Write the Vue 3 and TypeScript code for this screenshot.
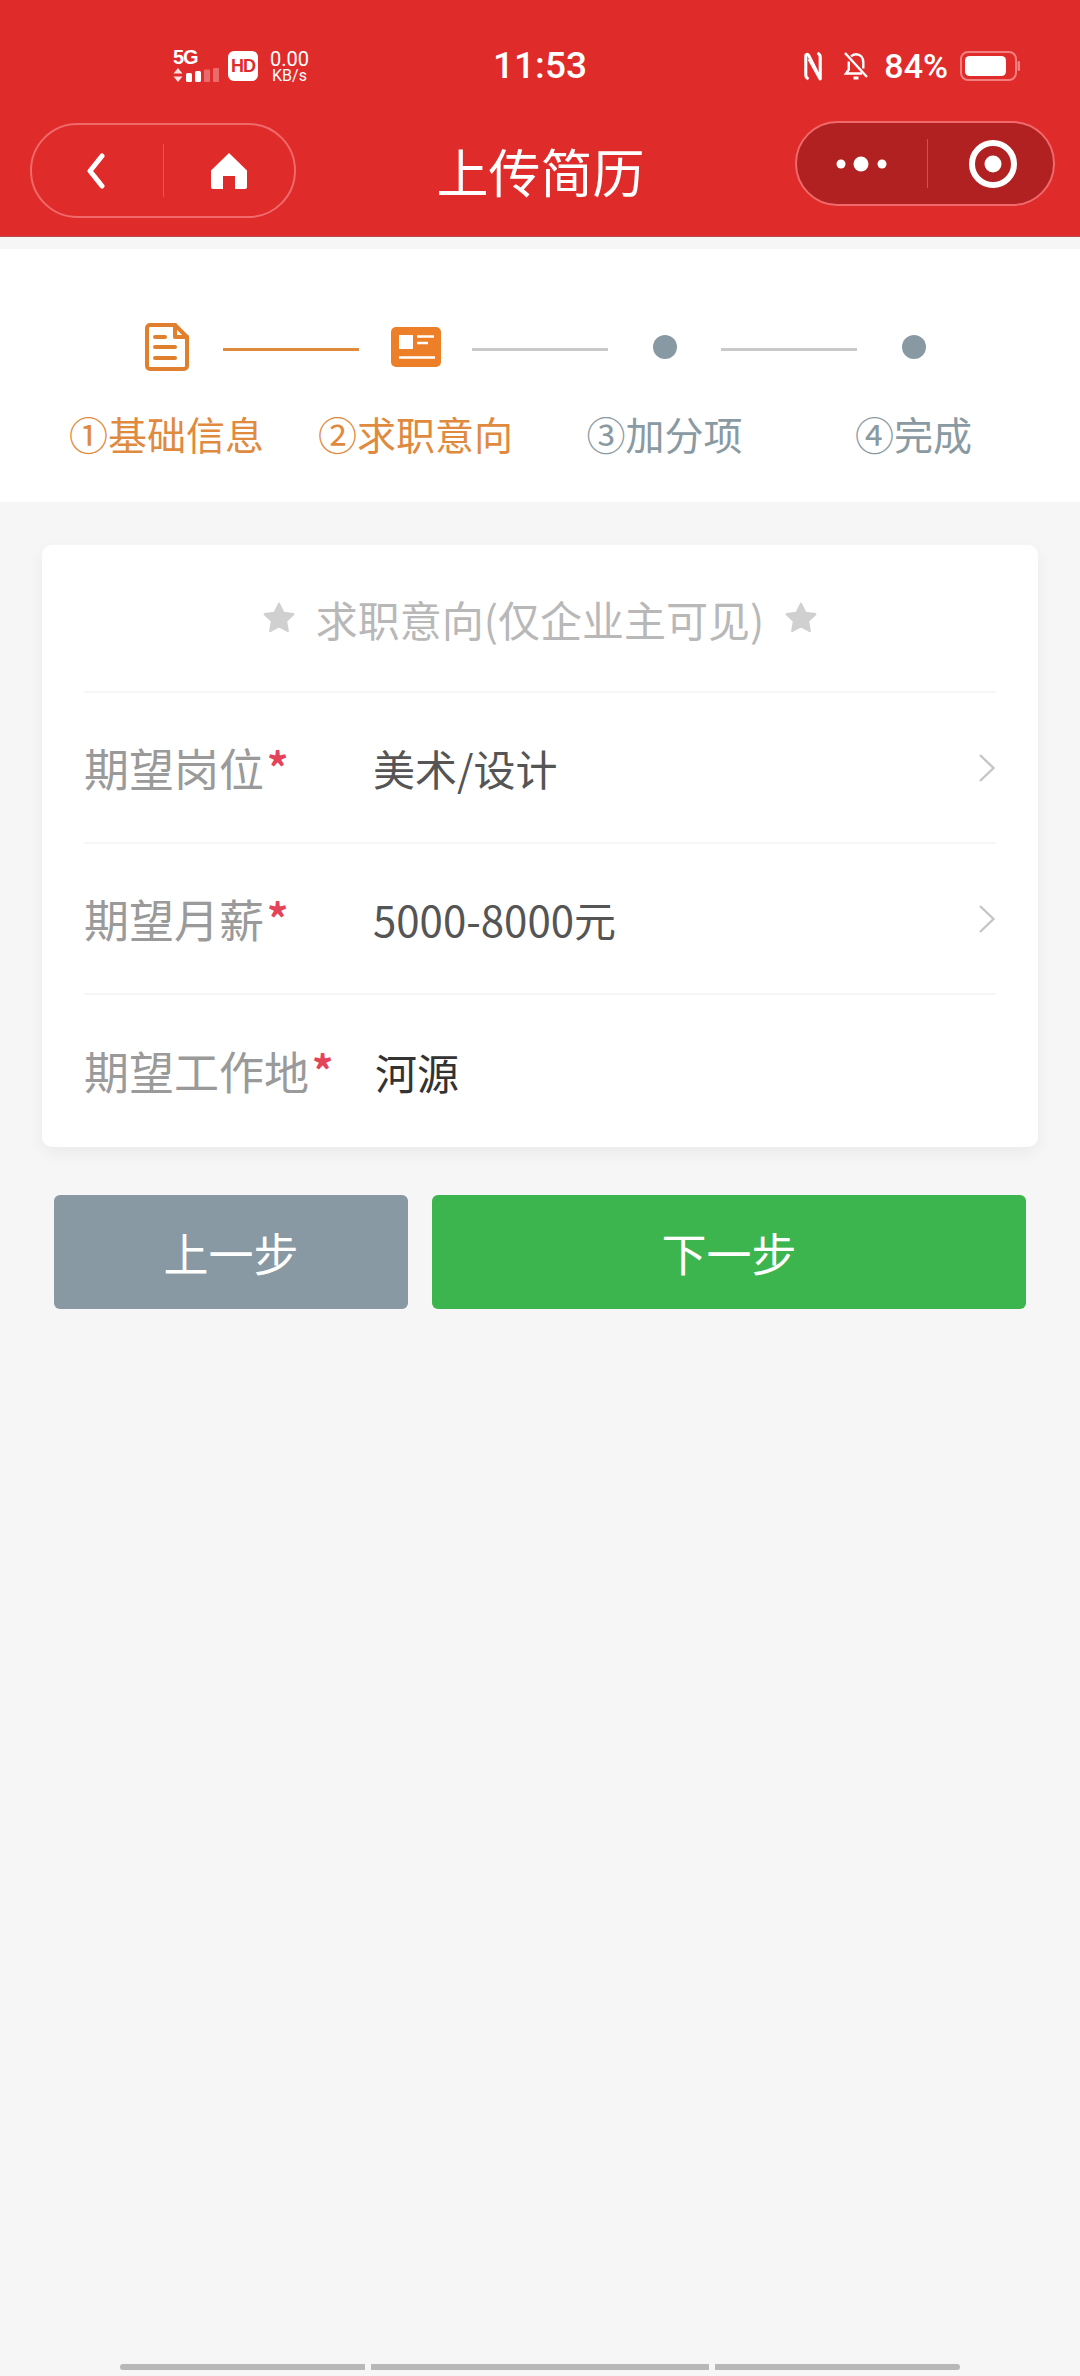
<script setup lang="ts">
interface Step {
  label: string;
  done: boolean;
}

interface FormRow {
  label: string;
  value: string;
  arrow: boolean;
}

const steps: Step[] = [
  { label: '①基础信息', done: true },
  { label: '②求职意向', done: true },
  { label: '③加分项', done: false },
  { label: '④完成', done: false }
];

const rows: FormRow[] = [
  { label: '期望岗位', value: '美术/设计', arrow: true },
  { label: '期望月薪', value: '5000-8000元', arrow: true },
  { label: '期望工作地', value: '河源', arrow: false }
];
</script>

<template>
  <div class="page">
    <header class="header">
      <div class="status">
        <div class="status-left">
          <div class="net">
            <span class="net-type">5G</span>
            <svg class="net-bars" width="50" height="14" viewBox="0 0 50 14">
              <path d="M5 0l4.500 5.500h-9zM5 14l4.500-5.500h-9z" fill="#fff" fill-opacity=".85" />
              <rect x="13" y="5" width="6" height="9" rx="1.500" fill="#fff" />
              <rect x="22" y="3" width="6" height="11" rx="1.500" fill="#fff" />
              <rect x="31" y="1.500" width="6" height="12.500" rx="1" fill="#fff" fill-opacity=".3" />
              <rect x="40" y="0" width="6" height="14" rx="1" fill="#fff" fill-opacity=".3" />
            </svg>
          </div>
          <span class="hd">HD</span>
          <div class="speed">
            <span class="speed-num">0.00</span>
            <span class="speed-unit">KB/s</span>
          </div>
        </div>
        <div class="time">11:53</div>
        <div class="status-right">
          <svg width="20" height="30" viewBox="0 0 18 30" preserveAspectRatio="none" fill="none" stroke="#fff" stroke-width="2.800" stroke-linejoin="round">
            <path d="M5 28C3 27 2.500 26 2.500 24V5C2.500 3 4 2.500 5 4l8.500 19" />
            <path d="M13 2c2 1 2.500 2 2.500 4v22L5.500 8" />
          </svg>
          <svg class="bell" width="26" height="30" viewBox="0 0 26 30" fill="none" stroke="#fff" stroke-width="2.400">
            <path d="M8 5.500C9.300 4 11 3.300 13 3.300c4.500 0 7.300 3.400 7.300 8v6.200M5.800 10.500v8L3 22.500h16" />
            <path d="M2 2l22 24" />
            <path d="M10.500 27h5" stroke-width="3" />
          </svg>
          <span class="battery-text">84%</span>
          <svg width="60" height="30" viewBox="0 0 60 30">
            <rect x="1" y="1" width="55" height="28" rx="7" fill="none" stroke="#f47f7f" stroke-width="2" />
            <rect x="5" y="5" width="41" height="20" rx="4.500" fill="#fff" />
            <rect x="57.500" y="10" width="2.500" height="10" rx="1.200" fill="#f47f7f" />
          </svg>
        </div>
      </div>
      <div class="nav">
        <div class="capsule capsule-left">
          <div class="capsule-cell">
            <svg width="20" height="36" viewBox="0 0 20 36" fill="none" stroke="#fff" stroke-width="5" stroke-linecap="round" stroke-linejoin="round">
              <path d="M16 3L4 18l12 15" />
            </svg>
          </div>
          <div class="capsule-cell">
            <svg width="38" height="38" viewBox="0 0 38 38">
              <path d="M19 1L37 18.500V35a2 2 0 0 1-2 2H25V24H13v13H3a2 2 0 0 1-2-2V18.500z" fill="#fff" />
            </svg>
          </div>
        </div>
        <h1 class="title">上传简历</h1>
        <div class="capsule capsule-right">
          <div class="capsule-cell">
            <svg width="52" height="16" viewBox="0 0 52 16" fill="#fff">
              <circle cx="5" cy="8" r="4.500" />
              <circle cx="25" cy="8" r="7.500" />
              <circle cx="46" cy="8" r="4.500" />
            </svg>
          </div>
          <div class="capsule-cell target-cell">
            <svg width="50" height="50" viewBox="0 0 50 50">
              <circle cx="25" cy="25" r="21" fill="none" stroke="#fff" stroke-width="6" />
              <circle cx="25" cy="25" r="8.500" fill="#fff" />
            </svg>
          </div>
        </div>
      </div>
    </header>

    <section class="steps">
      <div class="step-track">
        <div class="step-cell">
          <svg width="44" height="48" viewBox="0 0 44 48" fill="none" stroke="#e07f2e" stroke-width="4" stroke-linecap="round" stroke-linejoin="round">
            <path d="M5 2h25l12 12v29a3 3 0 0 1-3 3H5a3 3 0 0 1-3-3V5a3 3 0 0 1 3-3z" />
            <path d="M30 2v12h12" />
            <path d="M10 14h10M10 24h20M10 35h20" />
          </svg>
        </div>
        <span class="step-line step-line-done"></span>
        <div class="step-cell">
          <svg width="50" height="40" viewBox="0 0 50 40">
            <rect width="50" height="40" rx="5" fill="#ec7f27" />
            <rect x="8" y="8" width="14" height="14" fill="#fff" />
            <path d="M26 9.500h17M26 16h11M8 30.500h36" stroke="#fff" stroke-width="2.600" />
          </svg>
        </div>
        <span class="step-line"></span>
        <div class="step-cell"><span class="step-dot"></span></div>
        <span class="step-line"></span>
        <div class="step-cell"><span class="step-dot"></span></div>
      </div>
      <div class="step-labels">
        <span
          v-for="step in steps"
          :key="step.label"
          class="step-label"
          :class="{ 'is-done': step.done }"
        >{{ step.label }}</span>
      </div>
    </section>

    <main class="content">
      <section class="card">
        <div class="card-title">
          <svg class="star" width="34" height="34" viewBox="0 0 32 32">
            <path d="M16 2.500l4.200 8.600 9.300 1.300-6.800 6.600 1.600 9.400-8.300-4.500-8.300 4.500 1.600-9.400-6.800-6.600 9.300-1.300z" fill="#d0d0d0" stroke="#d0d0d0" stroke-width="2" stroke-linejoin="round" />
          </svg>
          <span>求职意向(仅企业主可见)</span>
          <svg class="star" width="34" height="34" viewBox="0 0 32 32">
            <path d="M16 2.500l4.200 8.600 9.300 1.300-6.800 6.600 1.600 9.400-8.300-4.500-8.300 4.500 1.600-9.400-6.800-6.600 9.300-1.300z" fill="#d0d0d0" stroke="#d0d0d0" stroke-width="2" stroke-linejoin="round" />
          </svg>
        </div>
        <div v-for="row in rows" :key="row.label" class="row">
          <span class="row-label">{{ row.label }}<i class="required">*</i></span>
          <span class="row-value" :class="{ 'is-input': !row.arrow }">{{ row.value }}</span>
          <svg v-if="row.arrow" class="chevron" width="18" height="30" viewBox="0 0 18 30" fill="none" stroke="#c6c6c6" stroke-width="2.400">
            <path d="M2 2l13.500 13L2 28" />
          </svg>
        </div>
      </section>

      <div class="actions">
        <button class="btn btn-prev" type="button">上一步</button>
        <button class="btn btn-next" type="button">下一步</button>
      </div>
    </main>

    <div class="home-bar">
      <span class="home-seg seg-a"></span>
      <span class="home-seg seg-b"></span>
      <span class="home-seg seg-c"></span>
    </div>
  </div>
</template>

<style>
html,
body {
  margin: 0;
  background: #f6f6f6;
}
</style>

<style scoped>
.page {
  position: relative;
  width: 1080px;
  height: 2376px;
  overflow: hidden;
  background: #f6f6f6;
  font-family: 'Noto Sans CJK SC', 'Noto Sans', sans-serif;
}

.header {
  height: 236px;
  background: #e02b2b;
  border-bottom: 1px solid #b94a4a;
  color: #fff;
}

.status {
  display: grid;
  grid-template-columns: 1fr auto 1fr;
  align-items: center;
  height: 66px;
  padding: 33px 60px 0;
}

.status-left,
.status-right {
  display: flex;
  align-items: center;
}

.status-left {
  padding-left: 113px;
}

.status-right {
  justify-content: flex-end;
}

.net {
  display: flex;
  flex-direction: column;
  gap: 3px;
  width: 55px;
}

.net-type {
  font-family: 'Liberation Sans', sans-serif;
  font-size: 20px;
  line-height: 15px;
  font-weight: 700;
  letter-spacing: -1px;
}

.hd {
  width: 30px;
  height: 30px;
  border-radius: 6px;
  background: #fff;
  color: #e02b2b;
  font-family: 'Liberation Sans', sans-serif;
  font-size: 18px;
  font-weight: 700;
  line-height: 30px;
  text-align: center;
  letter-spacing: -1px;
}

.speed {
  display: flex;
  flex-direction: column;
  margin-left: 12px;
  font-family: Roboto, sans-serif;
  text-align: center;
}

.speed-num {
  font-size: 20px;
  line-height: 18px;
}

.speed-unit {
  font-size: 16px;
  line-height: 15px;
}

.time {
  font-family: Roboto, sans-serif;
  font-size: 37px;
  font-weight: 500;
  line-height: 40px;
}

.bell {
  margin-left: 20px;
}

.battery-text {
  margin: 0 12px 0 15px;
  font-family: Roboto, sans-serif;
  font-size: 34px;
  font-weight: 500;
  line-height: 36px;
}

.nav {
  display: grid;
  grid-template-columns: 266px 1fr 260px;
  align-items: start;
  padding: 22px 25px 0 30px;
}

.capsule {
  display: flex;
  box-sizing: border-box;
  border: 2px solid #f0696b;
  border-radius: 48px;
}

.capsule-left {
  height: 95px;
  margin-top: 2px;
}

.capsule-right {
  height: 85px;
  background: #b12121;
}

.capsule-cell {
  display: flex;
  flex: 1;
  align-items: center;
  justify-content: center;
}

.capsule-left .capsule-cell:first-child {
  flex: 0 0 132px;
  border-right: 1px solid #ec5556;
  margin: 19px 0;
  padding-right: 4px;
  box-sizing: border-box;
}

.capsule-right .capsule-cell:first-child {
  flex: 0 0 130px;
  border-right: 1px solid #d55052;
  margin: 16px 0;
}

.target-cell {
  padding-left: 4px;
}

.title {
  margin: 14px 0 0;
  padding-right: 10px;
  font-size: 52px;
  font-weight: 400;
  line-height: 72px;
  text-align: center;
}

.steps {
  margin-top: 12px;
  height: 253px;
  background: #fff;
}

.step-track {
  display: flex;
  align-items: center;
  height: 48px;
  padding: 74px 0 0 110px;
}

.step-cell {
  display: flex;
  flex: 0 0 113px;
  align-items: center;
  justify-content: center;
}

.step-line {
  flex: 0 0 136px;
  height: 3px;
  margin-top: 5px;
  background: #c9c9c9;
}

.step-line-done {
  background: #e08a3c;
}

.step-dot {
  width: 24px;
  height: 24px;
  border-radius: 50%;
  background: #8899a4;
}

.step-labels {
  display: grid;
  grid-template-columns: repeat(4, 1fr);
  padding: 38px 42px 0;
}

.step-label {
  color: #8a9aa3;
  font-size: 39px;
  line-height: 48px;
  text-align: center;
}

.step-label.is-done {
  color: #df8a3e;
}

.content {
  padding: 43px 42px 0;
}

.card {
  box-sizing: border-box;
  height: 602px;
  padding: 0 42px;
  border-radius: 10px;
  background: #fff;
  box-shadow: 0 6px 16px rgba(0, 0, 0, 0.05);
}

.card-title {
  display: flex;
  align-items: center;
  justify-content: center;
  gap: 6px;
  height: 146px;
  box-sizing: border-box;
  color: #b8b8b8;
  font-size: 42px;
}

.star {
  margin: 0 14px;
}

.row {
  display: flex;
  align-items: center;
  height: 151px;
  border-top: 2px solid #f6f6f6;
  box-sizing: border-box;
}

.row:last-child {
  height: 154px;
}

.row-label {
  flex: 0 0 289px;
  color: #9a9a9a;
  font-size: 45px;
  line-height: 60px;
}

.required {
  margin-left: 3px;
  color: #e5435a;
  font-style: normal;
  font-size: 42px;
  font-weight: 700;
  line-height: 40px;
  vertical-align: 3px;
}

.row-value {
  flex: 1;
  color: #555;
  font-size: 42px;
}

.row-value.is-input {
  margin-left: 2px;
  color: #333;
}

.actions {
  display: flex;
  justify-content: space-between;
  margin-top: 48px;
  padding: 0 12px;
}

.btn {
  height: 114px;
  padding: 0;
  border: 0;
  border-radius: 6px;
  color: #fff;
  font-family: inherit;
  font-size: 45px;
}

.btn-prev {
  width: 354px;
  background: #8899a3;
}

.btn-next {
  width: 594px;
  background: #3db54e;
}

.home-bar {
  position: absolute;
  bottom: 6px;
  left: 120px;
  display: flex;
  gap: 6px;
}

.home-seg {
  height: 6px;
  background: #b8b8b8;
}

.seg-a {
  width: 245px;
  border-radius: 3px 0 0 3px;
}

.seg-b {
  width: 338px;
}

.seg-c {
  width: 245px;
  border-radius: 0 3px 3px 0;
}
</style>
